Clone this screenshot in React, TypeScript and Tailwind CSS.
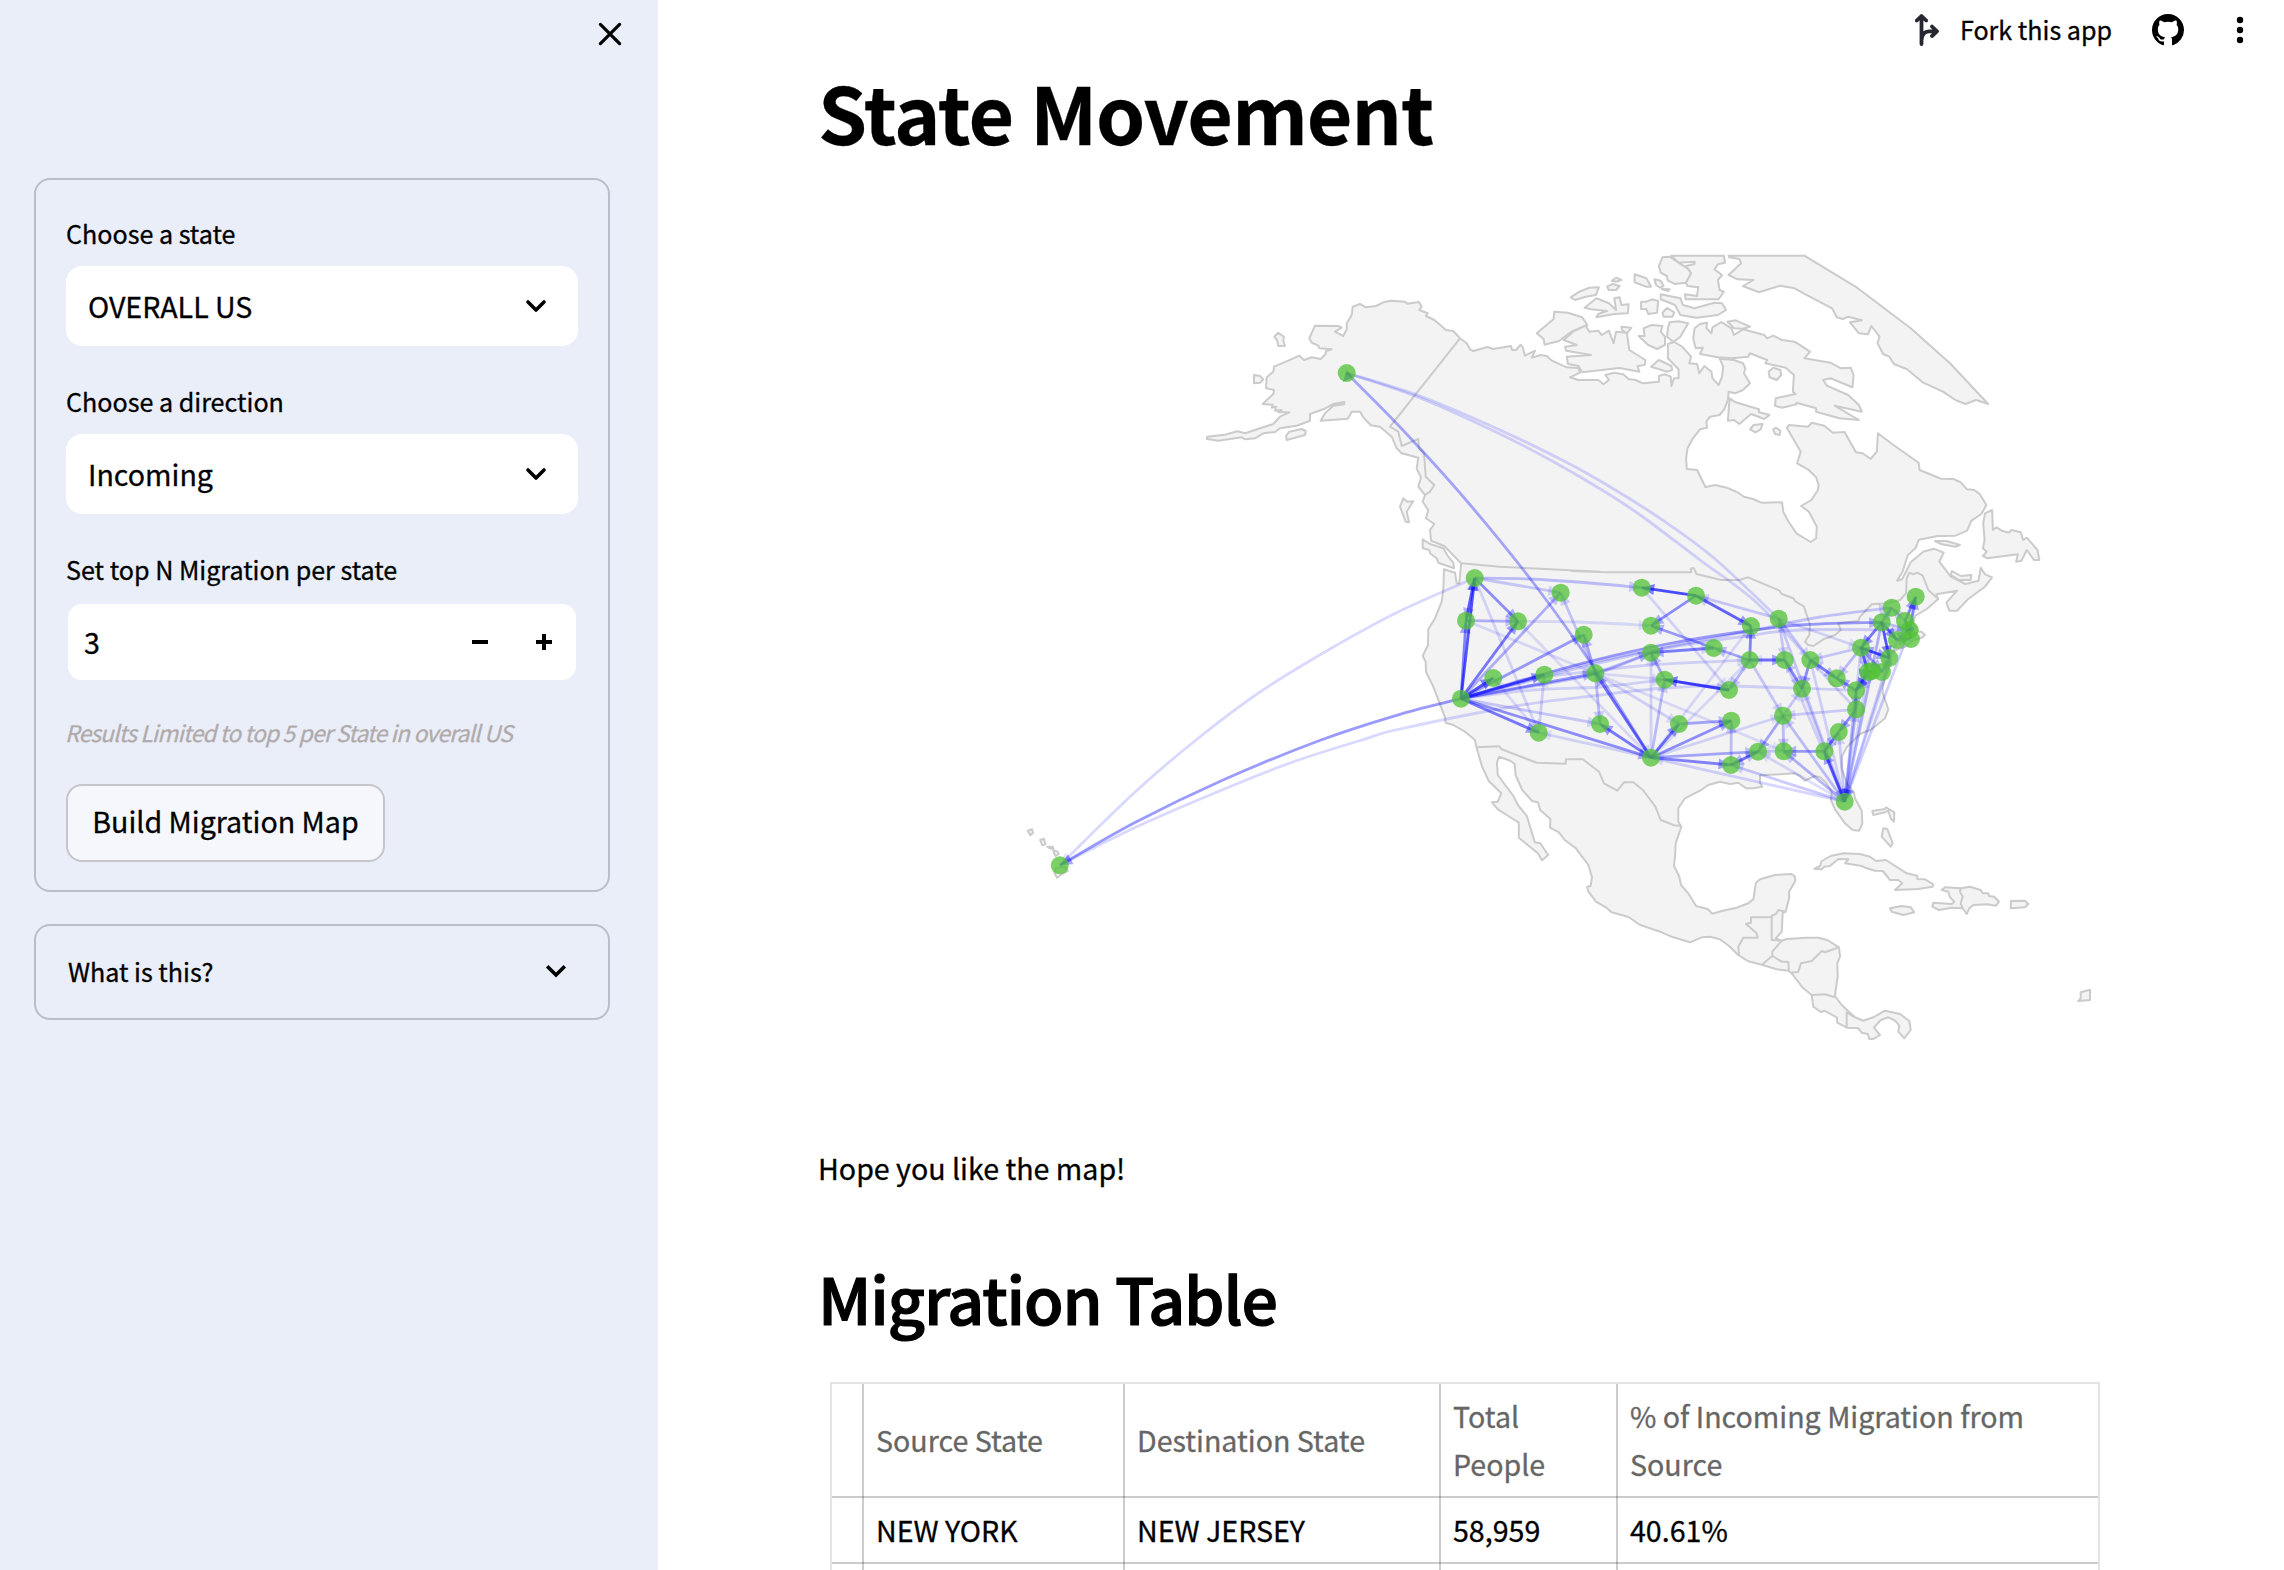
import React from "react";

/* ---------- geometry helpers ---------- */

type Pt = [number, number];

// Each map tile stores its coastline points in its own local units.
const tile = (ox: number, oy: number, sx: number, sy: number) => (s: string): string =>
  s
    .trim()
    .split(/\s+/)
    .map((p) => {
      const [x, y] = p.split(",").map(Number);
      return `${(ox + x / sx).toFixed(1)},${(oy + y / sy).toFixed(1)}`;
    })
    .join(" ");

const nw = tile(1200, 240, 3, 3);
const ne = tile(1500, 240, 2.8, 3);
const west = tile(1400, 540, 3, 3);
const east = tile(1700, 540, 3, 3);
const sw = tile(1000, 740, 2.24, 3);
const se = tile(1640, 760, 3, 3);

const mainland = [
  nw("780,295 800,310 810,328 820,333 862,321 880,327 933,318 936,330 948,330 962,314 968,322 975,347 1005,332 995,353 1022,345 1040,348 1056,362 1100,382 1135,384 1140,398 1110,412 1135,420"),
  ne("275,420 290,433 305,420 295,405 320,398 345,403 360,417 380,420 400,430 445,425 445,408 462,403 478,410 480,438 487,415 500,415 500,388 470,355 470,312 488,306 510,320 535,350 530,370 552,372 558,400 572,378 592,395 595,415 612,435 622,410 625,380 615,356 655,360 680,370 687,385 683,400 700,430 680,450 658,460 640,455 638,480 628,508 615,525 588,530 578,545 580,563 560,568 540,595 525,625 521,655 523,687 552,690 575,741 603,735 640,745 665,757 683,770 708,777 732,788 790,787 793,815 808,845 830,880 870,906 885,895 887,860 865,815 843,798 872,780 890,750 892,735 885,712 862,688 832,670 842,635 820,595 803,563 810,555 862,560 873,548 908,557 932,578 965,576 980,605 997,637 1015,640 1038,657 1055,635 1058,580 1095,610 1172,668 1175,690 1235,716 1270,717 1290,727 1308,748 1328,750 1343,762 1362,795 1348,822 1320,842 1308,872 1275,887 1225,888 1173,899 1163,925 1142,945 1127,995 1112,1022 1126,1018 1150,967 1185,935 1215,926 1242,938 1230,965 1262,1010 1303,1032 1340,1022 1346,983 1358,1003 1378,1012 1358,1040 1310,1078 1280,1112 1258,1112 1250,1088 1280,1052 1222,1063"),
  east("715,177 680,207 645,228 640,250 655,275 665,275 675,285 665,293 640,300 620,318 575,335 568,350 572,370 560,400 548,440 548,458 565,508 555,535 515,568 480,582 440,622 425,650 425,685 440,730 462,757 465,775 485,812 487,850 478,872 458,870 435,850 405,808 393,780 395,755 378,728 360,712 345,708 315,722 300,708 285,700 240,703 180,706 180,728 187,740 160,745 138,745 115,728 90,732 60,725 25,735"),
  se("180,92 135,115 115,145 115,185 124,200 107,250 105,290 102,317 118,350 123,375 145,400 168,438 203,447 217,461 245,453 290,443 325,430 340,418 348,368 360,358 405,345 455,342 465,350 465,365 447,395 448,412 437,455 428,458 425,515 407,535 425,542 440,537 500,533 535,533 562,540 597,562 600,590 592,610 593,650 587,690 585,708 605,735 645,772 670,782 700,772 735,752 780,762 808,783 812,810 793,835 775,815 778,797 765,782 745,772 722,780 702,803 720,825 700,837 688,837 683,822 665,818 655,805 620,803 592,788 590,772 553,752 543,756 520,740 515,705 490,685 455,640 445,632 410,628 368,615 325,604 295,585 270,560 240,538 210,530 185,532 150,547 100,532 65,517"),
  sw("1433,554 1408,531 1370,517 1357,502 1335,485 1318,455 1315,440 1323,438 1326,412 1318,375 1290,325 1265,300 1252,277 1232,263 1233,237 1210,210 1205,187 1192,183 1170,150 1155,105 1153,72 1143,62 1118,50 1113,68 1115,105 1150,168 1160,195 1180,228 1198,307 1210,310 1228,345 1214,361 1205,340 1162,293 1162,248 1135,225 1115,208 1102,187 1115,185 1123,160 1095,123 1080,80 1067,20"),
  west("225,600 195,575 160,555 137,548 135,532 100,440 78,395 77,365 68,348 84,315 85,268 105,235 125,185 130,150 132,88 165,98 170,130 178,130 183,75"),
  nw("783,970 733,918 693,902 690,870 703,852 678,835 685,810 668,785 675,765 655,740 663,713 650,685 655,653 605,640 590,625 575,590 540,560 512,556 490,532 480,515 455,515 443,536 362,542 375,520 400,497 433,493 433,486 400,492 370,508 330,522 330,542 290,557 240,565 225,576 190,580 165,595 135,598 125,592 55,602 20,597 22,590 75,584 112,574 135,580 220,552 240,530 268,517 235,517 245,510 225,512 228,500 215,503 218,494 188,492 220,462 222,450 198,445 200,412 220,395 222,380 265,362 298,347 312,360 335,352 362,357 377,342 378,333 395,328 358,325 355,317 335,308 328,295 345,257 415,258 425,263 405,275 430,288 440,268 440,250 455,225 458,200 480,192 498,202 528,198 550,187 573,182 615,185 622,191 657,186 665,200 658,210 683,220 678,228 703,240 738,270 760,273"),
].join(" ");

const islands: string[] = [
  ...[
    "235,278 252,290 250,302 255,317 235,318 232,302 223,290",
    "162,405 180,408 190,418 180,428 162,430",
    "268,575 305,567 317,573 315,585 260,600 258,588",
    "610,775 622,785 640,784 620,815 627,847 617,845 600,800",
    "668,898 690,912 730,925 745,950 760,968 762,985 715,968 710,955 690,940 688,930 668,925",
  ].map(nw),
  ...[
    "198,172 222,155 250,143 277,142 268,165 240,170 210,180",
    "300,140 315,132 335,138 325,150 305,150",
    "313,122 325,113 340,120 325,125",
    "377,103 410,115 423,140 410,140 377,127",
    "432,118 450,122 458,138 448,143 437,135",
    "453,147 475,148 470,153",
    "480,47 627,47 630,68 610,73 600,88 622,105 610,120 615,150 627,155 612,178 520,178 518,163 552,168 555,142 525,138 520,128 535,100 520,78 545,72 545,65 500,68",
    "445,78 455,52 475,50 500,68 525,85 535,100 520,128 490,132 470,122 467,108 450,98",
    "450,163 505,175 512,195 545,205 600,188 622,190 633,210 610,225 550,233 505,225 490,195 450,178",
    "237,203 270,175 305,190 325,210 320,175 335,172 340,195 360,193 358,220 320,222 270,232 275,222 300,213 255,208",
    "395,185 410,185 425,178 443,183 440,218 415,222 410,207 395,207",
    "455,218 468,204 488,217 483,230 458,230",
    "103,280 150,237 152,215 190,218 230,232 245,255 200,275 165,303 125,314 122,297",
    "240,257 250,275 275,272 285,285 305,272 318,310 325,275 355,278 362,330 407,360 405,375 385,378 390,395 335,384 230,397 220,378 190,372 187,350 255,345 185,332 182,320 215,315 178,300 205,275",
    "340,260 368,263 355,280 342,270",
    "388,288 405,288 402,265 425,255 455,258 450,275 462,290 462,315 440,327 415,315",
    "470,265 475,247 500,244 527,250 505,290 485,306 468,290",
    "580,248 578,265 592,280 595,262 620,246 648,265 655,285 680,268 740,285 748,295 765,287 790,300 825,305 868,335 852,355 925,368 955,385 982,383 990,405 987,442 925,415 905,420 915,437 975,465 1005,495 1013,515 937,497 1005,540 950,535 885,515 885,505 830,488 830,493 790,503 770,497 772,475 828,462 820,455 823,405 800,383 743,370 748,360 700,340 695,350 650,355 610,352 560,342 568,323 548,325 541,295 545,265 560,252",
    "637,245 660,241 700,260 680,266 655,265",
    "752,395 765,383 785,390 787,405 775,420 755,412",
    "643,475 660,487 725,508 725,517 755,525 740,537 703,522 670,552 655,540 638,542",
    "700,568 710,555 735,552 730,568 715,577",
    "765,568 773,563 785,572 783,585 770,582",
    "423,380 445,360 480,378 482,390 468,395",
    "640,47 852,47 1000,143 1150,265 1260,370 1367,492 1333,480 1303,492 1275,480 1240,455 1185,428 1140,388 1103,372 1090,350 1073,342 1057,310 1063,290 1040,258 1030,283 1005,280 980,247 1013,241 975,230 960,237 943,232 930,205 850,160 825,145 785,137 725,157 680,138 710,120 665,118 640,105 675,70 670,57 642,52",
    "1358,820 1378,810 1380,870 1390,862 1405,872 1425,878 1432,870 1458,877 1465,900 1475,893 1505,930 1510,960 1495,960 1475,930 1460,962 1445,965 1450,943 1365,955 1352,948 1363,935 1352,925 1357,900 1353,850",
    "1218,903 1250,903 1288,915 1275,920 1235,912",
    "1265,993 1290,1008 1320,1005 1318,1020 1285,1020 1262,1005",
  ].map(ne),
  ...[
    "697,153 735,147 738,142 763,157 762,185 752,175 745,152 735,157 700,165",
    "730,205 742,207 758,250 752,260 725,230",
    "523,327 540,318 545,303 572,288 610,280 660,282 690,290 708,303 738,300 800,340 832,347 832,357 855,358 880,373 878,380 835,387 765,390 787,370 775,360 750,360 728,333 705,332 680,325 665,318 615,310 625,298 595,297 570,318 553,320 545,328",
    "750,445 785,438 812,442 823,457 790,465 755,455",
    "905,390 915,382 962,385 990,380 1022,390 1028,400 1045,400 1047,408 1063,410 1077,425 1068,437 1040,433 1000,435 988,445 980,462 968,445 935,443 897,450 877,440 880,428 935,432 943,425 930,412 925,395",
    "1113,423 1155,422 1165,432 1155,442 1112,445",
    "1322,697 1350,689 1350,720 1315,723 1322,715",
  ].map(se),
  ...[
    "62,272 72,268 74,278 68,286",
    "90,300 98,296 102,313 95,316",
    "106,320 118,320 120,327 112,325",
    "119,332 128,334 132,342 124,348",
    "122,400 128,413 136,405 152,393 145,380 125,385",
  ].map(sw),
];

const borders: string[] = [
  nw("780,295 570,560 595,575 605,618 655,597 657,625 672,640 677,710 703,735 690,755 675,765"),
  nw("783,970 900,980 990,985 1200,995") +
    " " +
    ne("200,993 300,997 535,997 535,985 543,985 550,1002 620,1020 670,1020 695,1012 783,1052") +
    " " +
    east("245,162 280,175 285,183 312,200 330,255 328,285 315,305 325,315 340,318 370,298 405,285 422,270 415,250 475,243 480,230 515,193 560,190 600,180 618,160 620,115 628,98 640,103 652,98 668,107 685,150 715,177"),
  west("228,622 298,619 305,628 410,668 497,671 498,658 548,658 597,695 612,730 652,752 672,727 700,727") +
    " " +
    sw("1440,150 1468,200 1480,240 1510,256 1526,258"),
  se("297,585 295,560 310,533 353,533 350,520 318,492 333,488 333,472 393,472"),
  se("437,455 415,450 408,462 395,467 395,540 425,542 397,575 397,588 368,612"),
  se("397,588 425,605 445,605 447,632"),
  se("452,638 475,635 483,610 515,603 545,573 555,577 597,562"),
  se("515,705 555,703 585,712"),
  se("645,772 620,757 620,803"),
  se("962,385 960,395 968,410 962,430 968,445"),
];

/* ---------- migration data ---------- */

const nodes: Record<string, Pt> = {
  WA: [1474.7, 578], OR: [1466, 620.7], CA: [1461, 698.7], ID: [1518, 621.3], NV: [1493.3, 678],
  UT: [1544.3, 674.7], AZ: [1538.7, 732.7], MT: [1560.7, 592.7], WY: [1583.7, 634.7], CO: [1595.3, 673.3],
  NM: [1600, 724], ND: [1641.7, 587.7], SD: [1651, 625.7], NE: [1651, 652.7], KS: [1664.7, 679.7],
  OK: [1679, 724], TX: [1651, 757.7], MN: [1696, 595.7], IA: [1713.7, 648], MO: [1729, 690],
  AR: [1731.3, 720.7], LA: [1731, 765], WI: [1751, 626], MI: [1778.7, 618.7], IL: [1749.7, 660],
  IN: [1784.7, 660], OH: [1810.3, 660], KY: [1802, 688.7], WV: [1836.7, 678.3], TN: [1783, 715.7],
  VA: [1856, 690.3], NC: [1856, 709.3], SC: [1838.7, 732], GA: [1824.3, 751.3], AL: [1783.7, 751.3],
  MS: [1758, 751.7], FL: [1844.7, 801.7], PA: [1861, 647.7], NY: [1881.7, 622.3], VT: [1891.7, 607.7],
  ME: [1915.7, 596.7], NH: [1905, 621], MA: [1909.7, 630], RI: [1911, 639], CT: [1897, 640],
  NJ: [1889.3, 658], DE: [1882, 672], MD: [1868, 672], DC: [1872, 671], AK: [1346.7, 373], HI: [1059.8, 865.3],
};

// "from>to:opacity", the arrow head sits at the second state
const flows = `
CA>WA:.7 OR>WA:.45 WA>OR:.4 CA>OR:.5 WA>ID:.45 CA>ID:.55 OR>ID:.3 CA>NV:.7 AZ>NV:.12 CA>UT:.6 AZ>UT:.17
CA>AZ:.55 WA>AZ:.14 TX>AZ:.15 CA>MT:.3 WA>MT:.2 CO>MT:.22 CA>WY:.4 CO>WY:.35 CA>CO:.4 TX>CO:.45 TX>NM:.55
CA>NM:.2 CO>NM:.25 MN>ND:.75 MN>SD:.45 IA>SD:.4 IA>NE:.4 KS>NE:.35 TX>NE:.15 CO>NE:.2 MO>KS:.75 TX>KS:.25
CO>KS:.12 TX>OK:.55 CO>OK:.16 CO>TX:.2 TX>AR:.45 OK>AR:.35 LA>AR:.25 TX>LA:.5 MS>LA:.4 LA>MS:.3 CA>TX:.45 TX>ID:.12
MN>WI:.55 WI>MN:.2 IL>WI:.5 MI>MN:.2 IL>IA:.35 NE>IA:.2 KS>MO:.2 IL>MO:.28 ND>MO:.15 IL>IN:.5 IN>IL:.15 KY>IN:.3
IN>KY:.25 OH>KY:.45 TN>KY:.2 MI>OH:.2 WV>OH:.3 OH>WV:.35 VA>WV:.45 PA>WV:.25 PA>OH:.2 MI>IN:.2 MI>PA:.15
FL>MI:.2 TX>WI:.13 TX>IL:.13 TN>MS:.35 TN>AL:.25 NC>TN:.18 IL>TN:.2 TX>TN:.15 FL>TN:.25
TX>MS:.35 AL>MS:.15 GA>AL:.4 FL>AL:.3 FL>MS:.14 FL>LA:.22 FL>TX:.17 FL>GA:.5 GA>FL:.2 SC>GA:.3 GA>SC:.3 NC>SC:.45
VA>NC:.45 FL>NC:.25 FL>SC:.18 FL>KY:.16 OH>FL:.16 IN>FL:.16 VA>FL:.16 PA>FL:.15 NY>FL:.3 NJ>FL:.18 CT>FL:.16
MA>FL:.2 MD>FL:.14 DE>VA:.2 MD>VA:.6 DC>VA:.4 NJ>PA:.5 NY>PA:.55 MD>PA:.3 PA>NJ:.5 NY>NJ:.7 NY>CT:.6 PA>MD:.4
PA>DE:.4 NJ>DE:.3 MD>DC:.6 NY>VT:.35 NH>VT:.25 MA>NH:.5 MA>ME:.5 NH>ME:.5 MA>RI:.5 CT>RI:.3 CT>MA:.3 NY>MA:.25
OR>CO:.13 CO>AL:.12`
  .trim()
  .split(/\s+/)
  .map((s) => {
    const [pair, o] = s.split(":");
    const [a, b] = pair.split(">");
    return { pts: [nodes[a], nodes[b]] as Pt[], o: Number(o) };
  });

const arcs: { pts: Pt[]; o: number; bare?: boolean }[] = [
  { pts: [nodes.TX, [1597, 672], [1535, 585], [1466, 500], [1400, 427], nodes.AK], o: 0.35, bare: true },
  { pts: [nodes.MI, [1714, 558], [1661, 519], [1607, 485], [1564, 461], [1500, 430], [1420, 396], nodes.AK], o: 0.17, bare: true },
  { pts: [nodes.NC, [1813, 663], [1757, 603], [1700, 560], [1643, 517], [1607, 493], [1554, 462], [1500, 434], [1420, 398], nodes.AK], o: 0.17, bare: true },
  { pts: [nodes.CA, [1400, 714.3], [1321, 740], [1223, 780], [1134, 823], nodes.HI], o: 0.42 },
  { pts: [nodes.WA, [1400, 611], [1330, 649], [1260, 692], [1196, 740], [1134, 793], nodes.HI], o: 0.16 },
  { pts: [nodes.VA, [1729, 686], [1665, 688], [1600, 695], [1516, 706], [1400, 729], [1362, 740], [1290, 763], [1210, 795], [1134, 828], nodes.HI], o: 0.16 },
  { pts: [nodes.CA, [1533, 677], [1595, 660], [1667, 644], [1740, 632], [1800, 625], nodes.NY], o: 0.4 },
  { pts: [nodes.CA, [1595, 662], [1740, 633], [1820, 617], nodes.VT], o: 0.22 },
  { pts: [nodes.CA, [1595, 664], [1667, 648], [1740, 637], [1800, 630], nodes.MA], o: 0.18 },
  { pts: [nodes.CA, [1540, 678], [1595, 671], [1651, 665], nodes.IL], o: 0.16 },
  { pts: [nodes.CA, [1533, 690], [1600, 687], nodes.KS], o: 0.15 },
  { pts: [nodes.CA, [1533, 686], [1595, 674], nodes.NE], o: 0.25 },
  { pts: [nodes.WA, [1530, 579], [1590, 583], nodes.ND], o: 0.25 },
  { pts: [nodes.ID, [1580, 622], nodes.SD], o: 0.13 },
];

const curve = (p: Pt[]): string => {
  if (p.length === 2) return `M${p[0]}L${p[1]}`;
  let d = `M${p[0]}`;
  for (let i = 0; i < p.length - 1; i++) {
    const a = p[i - 1] ?? p[i];
    const b = p[i];
    const c = p[i + 1];
    const e = p[i + 2] ?? c;
    d += `C${b[0] + (c[0] - a[0]) / 6},${b[1] + (c[1] - a[1]) / 6} ${c[0] - (e[0] - b[0]) / 6},${c[1] - (e[1] - b[1]) / 6} ${c[0]},${c[1]}`;
  }
  return d;
};

const head = (p: Pt[]): string => {
  const [x, y] = p[p.length - 1];
  const [px, py] = p[p.length - 2];
  const len = Math.hypot(x - px, y - py) || 1;
  const ux = (px - x) / len;
  const uy = (py - y) / len;
  const bx = x + ux * 12.5;
  const by = y + uy * 12.5;
  return `M${x},${y}L${bx - uy * 5.5},${by + ux * 5.5}L${bx + uy * 5.5},${by - ux * 5.5}Z`;
};

function MigrationMap() {
  return (
    <svg viewBox="818 240 1306 820" className="mt-[81px] block h-[820px] w-[1306px]">
      <g fill="#f3f3f3" stroke="#cbcbcb" strokeWidth="2" strokeLinejoin="round">
        <polygon points={mainland} />
        {islands.map((p, i) => (
          <polygon key={i} points={p} />
        ))}
        {borders.map((p, i) => (
          <polyline key={i} points={p} fill="none" />
        ))}
      </g>
      {[...arcs, ...flows].map((f, i) => (
        <React.Fragment key={i}>
          <path d={curve(f.pts)} fill="none" stroke="#1010ff" strokeWidth="2.8" opacity={f.o} />
          {!("bare" in f && f.bare) && <path d={head(f.pts)} fill="#1010ff" opacity={f.o * 0.7} />}
        </React.Fragment>
      ))}
      <path d="M1346.5 370L1353 377L1343 382Z" fill="#0000ff" opacity="0.5" />
      {Object.entries(nodes).map(([k, [x, y]]) => (
        <circle key={k} cx={x} cy={y} r="9" fill="#52c234" fillOpacity="0.76" />
      ))}
    </svg>
  );
}

/* ---------- controls ---------- */

function Chevron({ round = true }: { round?: boolean }) {
  return (
    <svg
      viewBox="0 0 24 16"
      className="h-4 w-6"
      fill="none"
      stroke="#000"
      strokeWidth="3.6"
      strokeLinecap={round ? "round" : "butt"}
      strokeLinejoin={round ? "round" : "miter"}
    >
      <path d={round ? "M4 4 L12 12 L20 4" : "M3.2 3.2 L12 12 L20.8 3.2"} />
    </svg>
  );
}

function Label({ children }: { children: React.ReactNode }) {
  return <div className="h-[54px] text-[25.1px] leading-[42px]">{children}</div>;
}

function Select({ label, value }: { label: string; value: string }) {
  return (
    <div className="mb-[34px]">
      <Label>{label}</Label>
      <div className="flex h-20 items-center justify-between rounded-2xl bg-white pr-[30px] pl-[22px]">
        <span className="text-[28.6px] leading-[44px]">{value}</span>
        <Chevron />
      </div>
    </div>
  );
}

function Sidebar() {
  return (
    <aside className="h-full w-[658px] shrink-0 bg-[#e9eef9] pr-12 pl-[34px]">
      <div className="flex h-[178px] justify-end">
        <svg viewBox="0 0 24 24" className="mt-[22px] -mr-[12px] h-6 w-6" fill="none" stroke="#000" strokeWidth="3.2" strokeLinecap="round">
          <path d="M2.4 2.4 L21.6 21.6 M21.6 2.4 L2.4 21.6" />
        </svg>
      </div>
      <div className="h-[714px] w-[576px] rounded-2xl border-2 border-[#b9becb] px-[30px] pt-8">
        <Select label="Choose a state" value="OVERALL US" />
        <Select label="Choose a direction" value="Incoming" />
        <Label>Set top N Migration per state</Label>
        <div className="mx-0.5 mt-0.5 flex h-[76px] items-center rounded-[14px] bg-white pr-6 pl-4">
          <span className="flex-1 text-[28.6px] leading-[44px]">3</span>
          <span className="h-1 w-4 bg-black" />
          <svg viewBox="0 0 16 16" className="ml-12 h-4 w-4" fill="#000">
            <path d="M6 0h4v6h6v4h-6v6H6v-6H0V6h6z" />
          </svg>
        </div>
        <div className="mt-[37px] -ml-px h-[31px] text-[22.7px] leading-[31px] tracking-[-0.78px] whitespace-nowrap text-[#b1aaaa] italic">
          Results Limited to top 5 per State in overall US
        </div>
        <button className="mt-9 flex h-[78px] w-[319px] items-center justify-center rounded-2xl border-2 border-[#c4c6cb] bg-[#f5f7fc] pb-1 text-[28.6px] leading-[44px] whitespace-nowrap">
          Build Migration Map
        </button>
      </div>
      <div className="mt-8 flex h-24 w-[576px] items-center justify-between rounded-2xl border-2 border-[#b9becb] pr-10 pb-0.5 pl-8">
        <span className="text-[25.1px] leading-[42px]">What is this?</span>
        <Chevron round={false} />
      </div>
    </aside>
  );
}

function Toolbar() {
  return (
    <div className="absolute top-0 right-0 flex h-[60px] items-center pr-9">
      <svg viewBox="0 0 24 32" className="mr-[21px] h-8 w-6" fill="none" stroke="#262730" strokeWidth="3.8" strokeLinecap="round" strokeLinejoin="round">
        <path d="M6.5 30V2.5M1.8 6.5L6.5 2L11.2 6.5M6.5 26C7 20 10 17.3 14 17.3H21M17 12.5L22 17.3L17 22" />
      </svg>
      <span className="pb-0.5 text-[25.1px] leading-[40px]">Fork this app</span>
      <svg viewBox="0 0 16 16" className="ml-10 h-8 w-8" fill="#000">
        <path d="M8 0C3.58 0 0 3.58 0 8c0 3.54 2.29 6.53 5.47 7.59.4.07.55-.17.55-.38 0-.19-.01-.82-.01-1.49-2.01.37-2.53-.49-2.69-.94-.09-.23-.48-.94-.82-1.13-.28-.15-.68-.52-.01-.53.63-.01 1.08.58 1.23.82.72 1.21 1.87.87 2.33.66.07-.52.28-.87.51-1.07-1.78-.2-3.64-.89-3.64-3.95 0-.87.31-1.59.82-2.15-.08-.2-.36-1.02.08-2.12 0 0 .67-.21 2.2.82.64-.18 1.32-.27 2-.27s1.36.09 2 .27c1.53-1.04 2.2-.82 2.2-.82.44 1.1.16 1.92.08 2.12.51.56.82 1.27.82 2.15 0 3.07-1.87 3.75-3.65 3.95.29.25.54.73.54 1.48 0 1.07-.01 1.93-.01 2.2 0 .21.15.46.55.38A8.01 8.01 0 0 0 16 8c0-4.42-3.58-8-8-8z" />
      </svg>
      <svg viewBox="0 0 16 32" className="ml-12 h-8 w-4" fill="#000">
        <circle cx="8" cy="6" r="3.2" />
        <circle cx="8" cy="16" r="3.2" />
        <circle cx="8" cy="26" r="3.2" />
      </svg>
    </div>
  );
}

const columns = ["", "Source State", "Destination State", "Total People", "% of Incoming Migration from Source"];
const rows = [
  ["", "NEW YORK", "NEW JERSEY", "58,959", "40.61%"],
  ["", "", "", "", ""],
];

function MigrationTable() {
  return (
    <div className="mt-[42px] ml-3 w-[1270px] border-x-2 border-t-2 border-[#e4e4e4] text-[28.6px] leading-[48px]">
      <div className="grid h-[112px] grid-cols-[30px_261px_316px_177px_482px] text-[#666]">
        {columns.map((c, i) => (
          <div key={i} className="flex items-center border-l-2 border-black/20 px-3 first:border-l-0">
            {c}
          </div>
        ))}
      </div>
      {rows.map((r, j) => (
        <div key={j} className="grid h-[66px] grid-cols-[30px_261px_316px_177px_482px] border-t-2 border-black/20">
          {r.map((c, i) => (
            <div key={i} className="-mt-0.5 flex items-center border-l-2 border-black/20 px-3 pt-0.5 first:border-l-0">
              {c}
            </div>
          ))}
        </div>
      ))}
    </div>
  );
}

export default function App() {
  return (
    <div className="flex h-[1570px] w-[2284px] overflow-hidden bg-white font-['Noto_Sans_CJK_SC','Noto_Sans',sans-serif] text-black [-webkit-text-stroke:0.3px]">
      <Sidebar />
      <main className="relative h-full flex-1 overflow-hidden pl-[160px]">
        <Toolbar />
        <h1 className="mt-[63px] text-[78.8px] leading-[96px] font-bold tracking-[-1.1px]">State Movement</h1>
        <MigrationMap />
        <p className="mt-[84px] text-[28.6px] leading-[48px]">Hope you like the map!</p>
        <h2 className="mt-[62px] text-[64.4px] leading-[86px] font-medium tracking-[-1.1px] [-webkit-text-stroke:1.2px]">Migration Table</h2>
        <MigrationTable />
      </main>
    </div>
  );
}
